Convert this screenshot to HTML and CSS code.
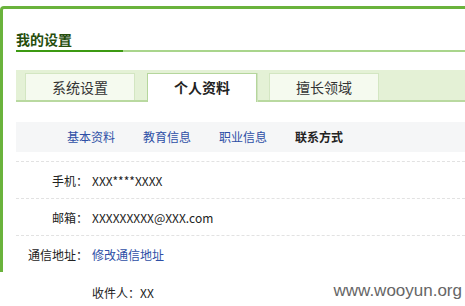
FILE: index.html
```html
<!DOCTYPE html>
<html lang="zh-CN">
<head>
    <meta charset="UTF-8">
    <title>我的设置</title>
    <link rel="stylesheet" href="styles.css">
</head>
<body>
    <div class="page">
        <div class="panel">
            <h1 class="title">我的设置</h1>

            <!-- onglets -->
            <div class="tabs">
                <div class="tab">系统设置</div>
                <div class="tab active">个人资料</div>
                <div class="tab">擅长领域</div>
            </div>

            <div class="subnav">
                <a href="#">基本资料</a>
                <a href="#">教育信息</a>
                <a href="#">职业信息</a>
                <span class="current">联系方式</span>
            </div>

            <div class="row">
                <span class="label">手机：</span>
                <span class="value">XXX****XXXX</span>
            </div>
            <div class="row">
                <span class="label">邮箱：</span>
                <span class="value">XXXXXXXXX@XXX.com</span>
            </div>
            <div class="row last">
                <span class="label">通信地址：</span>
                <a class="value" href="#">修改通信地址</a>
            </div>
        </div>

        <div class="row extra">
            <span class="label"></span>
            <span class="value">收件人：XX</span>
        </div>

        <div class="watermark">www.wooyun.org</div>
    </div>
</body>
</html>
```

FILE: styles.css
```css
* {
    margin: 0;
    padding: 0;
    box-sizing: border-box;
}

body {
    font-family: "Noto Sans CJK SC", "Liberation Sans", sans-serif;
    font-size: 12px;
    color: #222;
    background: #fff;
    overflow: hidden;
}

a {
    color: #2e4fa6;
    text-decoration: none;
}

.page {
    position: relative;
    height: 306px;
    padding-top: 6px;
}

.panel {
    border-top: 3px solid #6ab33c;
    border-left: 3px solid #6ab33c;
    border-top-left-radius: 4px;
    height: 266px;
    padding: 0 0 0 13px;
}

.title {
    font-size: 14px;
    font-weight: bold;
    color: #264d0c;
    line-height: 20px;
    padding-top: 20px;
    border-bottom: 2px solid #a9d58c;
    position: relative;
    height: 43px;
}

.title::after {
    content: "";
    position: absolute;
    left: 0;
    bottom: -2px;
    width: 107px;
    height: 2px;
    background: #3c9a12;
}

.tabs {
    display: flex;
    gap: 12px;
    margin-top: 18px;
    height: 32px;
    padding: 3px 0 0 9px;
    background: #e4f1d6;
    border-bottom: 2px solid #b9d9a0;
}

.tab {
    width: 110px;
    height: 27px;
    line-height: 26px;
    text-align: center;
    font-size: 14px;
    color: #333;
    background: #f5faef;
    border: 1px solid #d3e6c2;
    border-bottom: none;
}

.tab.active {
    height: 29px;
    background: #fff;
    font-weight: bold;
    color: #222;
    border: 1px solid #b5d69c;
    border-bottom: none;
    box-shadow: 1px 0 0 #cfe3bd;
}

.subnav {
    display: flex;
    gap: 28px;
    margin-top: 20px;
    height: 30px;
    line-height: 30px;
    padding-left: 51px;
    background: #f5f6f7;
}

.subnav .current {
    font-weight: bold;
    color: #222;
}

.row {
    display: flex;
    align-items: center;
    height: 37px;
    margin-top: 9px;
    border-top: 1px dashed #e2e2e2;
}

.row + .row {
    margin-top: 0;
}

.label {
    width: 72px;
    text-align: right;
    color: #222;
}

.value {
    margin-left: 4px;
    color: #222;
}

a.value {
    color: #2e4fa6;
}

.row.extra {
    border-top: none;
    margin-top: 0;
    padding-left: 16px;
    height: 40px;
}

.watermark {
    position: absolute;
    right: 3px;
    bottom: 5px;
    font-family: "Liberation Sans", sans-serif;
    font-size: 17px;
    color: #666;
}
```
